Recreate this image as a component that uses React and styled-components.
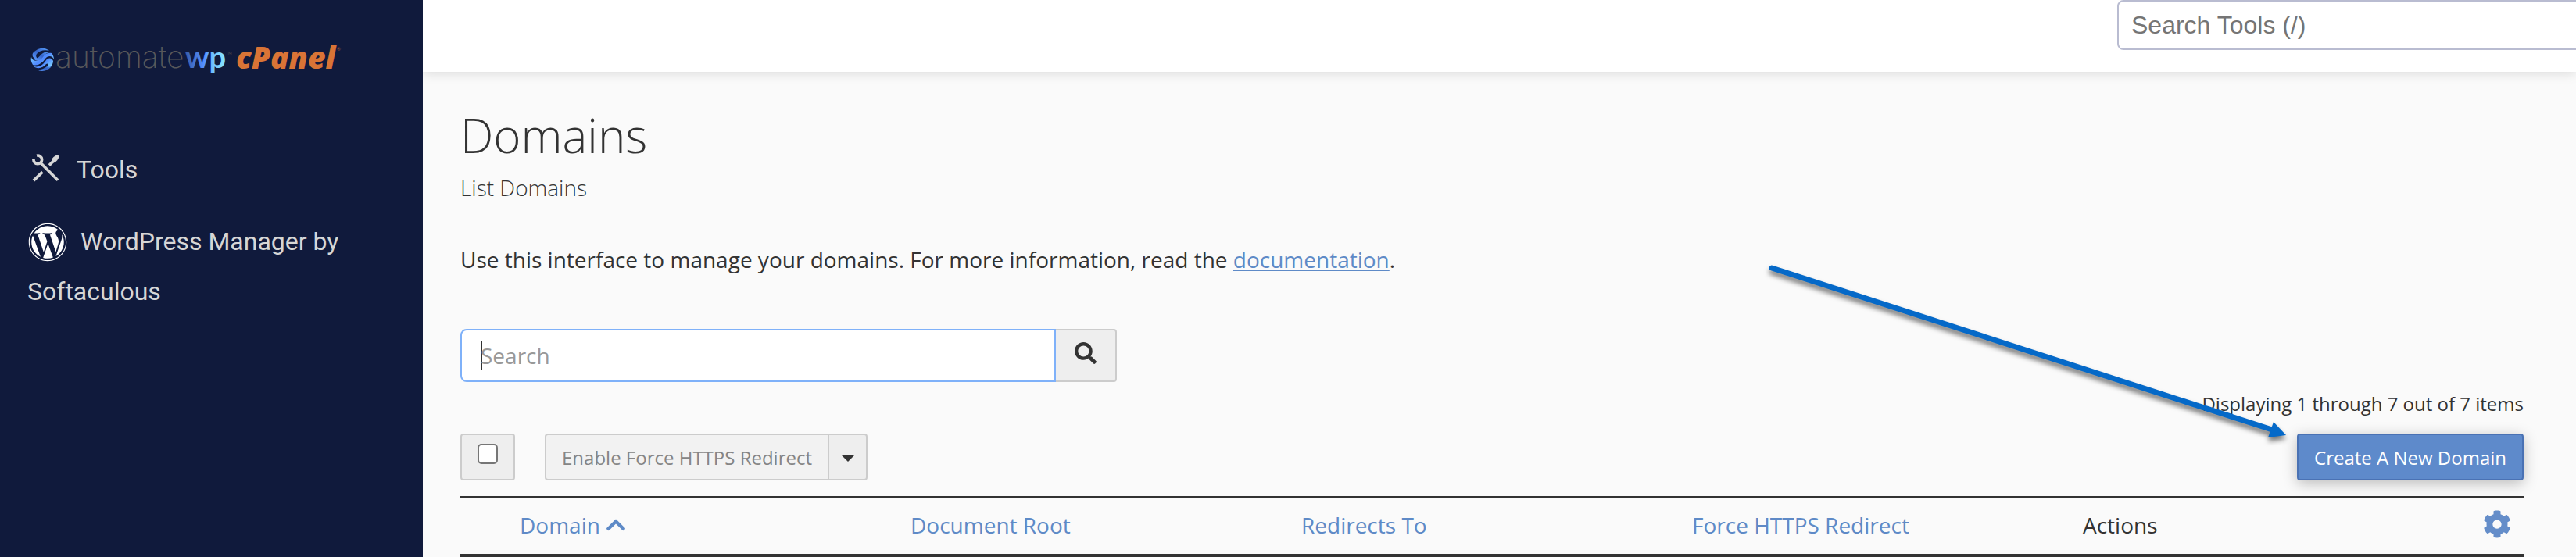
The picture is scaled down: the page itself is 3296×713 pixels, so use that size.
import styled, { createGlobalStyle } from 'styled-components';
import { FaWordpress, FaSearch, FaChevronUp, FaCog } from 'react-icons/fa';

const GlobalStyle = createGlobalStyle`
  * {
    box-sizing: border-box;
  }
  body {
    margin: 0;
    background: #fafafa;
    color: #333;
    font-family: 'Open Sans', sans-serif;
    font-size: 28px;
    line-height: 40px;
  }
  a {
    color: #5e8ac7;
  }
  button, input {
    font-family: inherit;
  }
`;

const Layout = styled.div`
  display: grid;
  grid-template-columns: 541px 1fr;
  min-height: 100vh;
`;

const Sidebar = styled.aside`
  background: #101a3c;
  padding: 50px 35px;
  position: relative;
  z-index: 2;
`;

const Brand = styled.a`
  display: block;
  margin-bottom: 79px;

  svg {
    display: block;
  }
`;

const Nav = styled.nav`
  display: flex;
  flex-direction: column;
  gap: 28px;
`;

const NavItem = styled.a`
  color: #d6d6d6;
  font-family: Roboto, sans-serif;
  font-size: 32px;
  line-height: 64px;
  text-decoration: none;
`;

const ToolsIcon = styled.svg`
  width: 35px;
  height: 36px;
  margin: 0 22px 0 6px;
  vertical-align: -5px;
`;

const WordPressIcon = styled(FaWordpress)`
  width: 50px;
  height: 50px;
  margin: 0 17px 0 1px;
  vertical-align: -15px;
  color: #fff;
`;

const Content = styled.div`
  min-width: 0;
`;

const TopBar = styled.header`
  position: relative;
  display: flex;
  justify-content: flex-end;
  height: 92px;
  background: #fff;
  box-shadow: 0 2px 14px rgba(0, 0, 0, 0.13);
`;

const ToolSearch = styled.input`
  width: 587px;
  height: 64px;
  padding: 0 16px;
  border: 2px solid #b9bcd1;
  border-right: 0;
  border-radius: 8px 0 0 8px;
  background: #fff;
  font-family: 'Liberation Sans', Arial, sans-serif;
  font-size: 32px;

  &::placeholder {
    color: #757575;
  }
`;

const Main = styled.main`
  padding: 48px 67px 0 48px;
`;

const Title = styled.h1`
  margin: 0 0 14px;
  font-size: 60px;
  font-weight: 300;
  line-height: 66px;
`;

const Subtitle = styled.h2`
  margin: 0 0 52px;
  font-size: 28px;
  font-weight: 300;
`;

const Intro = styled.p`
  margin: 0 0 69px;
`;

const SearchForm = styled.form`
  display: flex;
  width: 840px;
  height: 68px;
  margin-bottom: 11px;
`;

const SearchInput = styled.input`
  flex: 1;
  min-width: 0;
  padding: 0 24px;
  border: 2px solid #7fb1f9;
  border-radius: 8px 0 0 8px;
  outline: 0;
  background: linear-gradient(#333, #333) 24px 13px / 2px 37px no-repeat #fff;
  caret-color: transparent;
  font-size: 28px;

  &::placeholder {
    color: #999;
  }
`;

const SearchButton = styled.button`
  width: 78px;
  padding: 0 0 6px;
  border: 2px solid #ccc;
  border-left: 0;
  border-radius: 0 4px 4px 0;
  background: #eee;
  color: #333;
  font-size: 28px;

  svg {
    display: block;
    margin: 0 auto;
  }
`;

const PageInfo = styled.div`
  margin-bottom: 21px;
  font-size: 24px;
  line-height: 34px;
  text-align: right;
`;

const Toolbar = styled.div`
  display: flex;
  height: 60px;
  margin-bottom: 20px;
`;

const SelectAll = styled.label`
  display: flex;
  align-items: flex-start;
  margin-right: 38px;
  padding: 11px 20px;
  border: 2px solid #ccc;
  border-radius: 4px;
  background: #eee;
`;

const Checkbox = styled.input`
  appearance: none;
  width: 26px;
  height: 26px;
  margin: 0;
  border: 2px solid #767676;
  border-radius: 5px;
  background: #fff;
`;

const ActionButton = styled.button`
  padding: 0 20px;
  border: 2px solid #ccc;
  border-radius: 4px 0 0 4px;
  background: #f2f2f2;
  color: #858585;
  font-size: 24px;
`;

const CaretButton = styled.button`
  width: 49px;
  padding: 0;
  border: 2px solid #ccc;
  border-left: 0;
  border-radius: 0 4px 4px 0;
  background: #eee;

  &::before {
    content: '';
    display: block;
    width: 0;
    margin: 4px auto 0;
    border: 8px solid transparent;
    border-top-color: #333;
    border-bottom: 0;
  }
`;

const CreateArea = styled.div`
  position: relative;
  display: flex;
  margin-left: auto;
`;

const CreateButton = styled.button`
  padding: 0 20px;
  border: 2px solid #4a72b4;
  border-radius: 4px;
  background: #5e8acb;
  box-shadow: 0 4px 18px rgba(0, 0, 0, 0.25);
  color: #fff;
  font-size: 24px;
`;

const Pointer = styled.svg`
  position: absolute;
  right: calc(100% + 2px);
  bottom: 42px;
  width: 680px;
  height: 240px;
  filter: drop-shadow(0 5px 3px rgba(0, 0, 0, 0.55));
  pointer-events: none;
`;

const DomainTable = styled.table`
  width: 100%;
  table-layout: fixed;
  border-spacing: 0;
  border-top: 2px solid #333;
  border-bottom: 4px solid #333;

  th {
    padding: 15px 0 17px;
    font-weight: 400;
    text-align: left;
  }
`;

const SortLink = styled.a`
  text-decoration: none;

  svg {
    margin-left: 6px;
    vertical-align: -3px;
  }
`;

const SettingsButton = styled.button`
  display: block;
  margin: 0 auto 2px 12px;
  padding: 0;
  border: 0;
  background: none;
  color: #648dc9;
  font-size: 36px;

  svg {
    display: block;
  }
`;

function Logo() {
  return (
    <svg width="410" height="56" viewBox="35 50 410 56" role="img" aria-label="automatewp cPanel">
      <defs>
        <linearGradient id="swirl" x1="0" y1="0.2" x2="1" y2="0.8">
          <stop offset="0" stopColor="#7fd4ff" />
          <stop offset="0.5" stopColor="#4d86ff" />
          <stop offset="1" stopColor="#86e0ff" />
        </linearGradient>
        <linearGradient id="swirlDark" x1="0" y1="1" x2="1" y2="0">
          <stop offset="0" stopColor="#5b9bff" />
          <stop offset="0.5" stopColor="#3563c8" />
          <stop offset="1" stopColor="#5aa4ff" />
        </linearGradient>
        <linearGradient id="wp" gradientUnits="userSpaceOnUse" x1="239" y1="0" x2="288" y2="0">
          <stop offset="0" stopColor="#3a5fb0" />
          <stop offset="0.45" stopColor="#5590ff" />
          <stop offset="0.7" stopColor="#72c4ff" />
          <stop offset="1" stopColor="#8ae6ff" />
        </linearGradient>
      </defs>
      <g transform="translate(39 61)">
        <path fill="url(#swirlDark)" d="M3 7C8 1 17-2 24 4C18 2 11 4 8 8C6 11 8 14 11 14C6 16 1 12 3 7Z" />
        <path fill="url(#swirl)" d="M1 12C2 17 8 18 12 15C17 11 19 6 27 7C29 9 30 13 30 15C28 10 22 10 19 14C15 20 9 24 3 22C1 19 0 15 1 12Z" />
        <path fill="url(#swirlDark)" d="M5 15C10 15 12 9 16 7C19 5 23 4 25 6C18 6 17 13 12 16C10 17 7 17 5 15Z" />
        <path fill="url(#swirl)" d="M4 24C12 26 17 21 20 16C22 13 27 12 29 17C29 22 25 26 21 27C24 23 23 19 20 21C16 26 9 28 4 24Z" />
        <path fill="url(#swirlDark)" d="M8 28C14 29 19 26 22 23C23 26 27 24 28 22C24 30 14 32 8 28Z" />
      </g>
      <text x="71" y="87" fontFamily="Inter, sans-serif" fontSize="39" fontWeight="200" fill="#57575a">
        automate
      </text>
      <text x="237" y="87" fontFamily="Lato, sans-serif" fontSize="38" fontWeight="700" fill="url(#wp)">
        wp
      </text>
      <text x="289" y="70" fontFamily="Lato, sans-serif" fontSize="5" fill="#4e4e50">
        TM
      </text>
      <text
        x="302"
        y="88"
        fontFamily="Open Sans, sans-serif"
        fontSize="39"
        fontStyle="italic"
        fontWeight="800"
        fill="#d97436"
      >
        cPanel
      </text>
      <text x="431" y="65" fontFamily="Lato, sans-serif" fontSize="6" fill="#9a5636">
        ®
      </text>
    </svg>
  );
}

function ToolsGlyph() {
  return (
    <ToolsIcon viewBox="0 0 105 107" fill="none" stroke="currentColor" strokeWidth="11" aria-hidden="true">
      <path d="M6 19A16 16 0 1 0 18 6" />
      <path d="M30 31L99 101" />
      <path d="M6 102L40 69" />
      <path d="M66 43L82 27" />
      <path d="M75 22Q79 10 97 3L104 8Q100 28 83 34Z" fill="currentColor" stroke="none" />
    </ToolsIcon>
  );
}

const columns = ['Document Root', 'Redirects To', 'Force HTTPS Redirect'];

export default function App() {
  return (
    <>
      <GlobalStyle />
      <Layout>
        <Sidebar>
          <Brand href="#home">
            <Logo />
          </Brand>
          <Nav>
            <NavItem href="#tools">
              <ToolsGlyph />
              Tools
            </NavItem>
            <NavItem href="#wordpress">
              <WordPressIcon />
              WordPress Manager by Softaculous
            </NavItem>
          </Nav>
        </Sidebar>
        <Content>
          <TopBar>
            <ToolSearch type="text" aria-label="Search Tools" placeholder="Search Tools (/)" />
          </TopBar>
          <Main>
            <Title>Domains</Title>
            <Subtitle>List Domains</Subtitle>
            <Intro>
              Use this interface to manage your domains. For more information, read the{' '}
              <a href="#documentation">documentation</a>.
            </Intro>
            <SearchForm>
              <SearchInput type="text" aria-label="Search domains" placeholder="Search" />
              <SearchButton type="button" aria-label="Search">
                <FaSearch />
              </SearchButton>
            </SearchForm>
            <PageInfo>Displaying 1 through 7 out of 7 items</PageInfo>
            <Toolbar>
              <SelectAll>
                <Checkbox type="checkbox" aria-label="Select all domains" />
              </SelectAll>
              <ActionButton disabled>Enable Force HTTPS Redirect</ActionButton>
              <CaretButton aria-label="More actions" />
              <CreateArea>
                <CreateButton>Create A New Domain</CreateButton>
                <Pointer viewBox="0 0 680 240" aria-hidden="true">
                  <path d="M10 10L650 217" stroke="#0569c8" strokeWidth="7" strokeLinecap="round" />
                  <path d="M652 207L668 224L645 227Z" fill="#0569c8" />
                </Pointer>
              </CreateArea>
            </Toolbar>
            <DomainTable>
              <colgroup>
                <col width="76" />
                <col span="5" />
                <col width="64" />
              </colgroup>
              <thead>
                <tr>
                  <th aria-label="Select" />
                  <th>
                    <SortLink href="#domain">
                      Domain
                      <FaChevronUp />
                    </SortLink>
                  </th>
                  {columns.map((name) => (
                    <th key={name}>
                      <SortLink href="#sort">{name}</SortLink>
                    </th>
                  ))}
                  <th>Actions</th>
                  <th>
                    <SettingsButton aria-label="Table settings">
                      <FaCog />
                    </SettingsButton>
                  </th>
                </tr>
              </thead>
            </DomainTable>
          </Main>
        </Content>
      </Layout>
    </>
  );
}
